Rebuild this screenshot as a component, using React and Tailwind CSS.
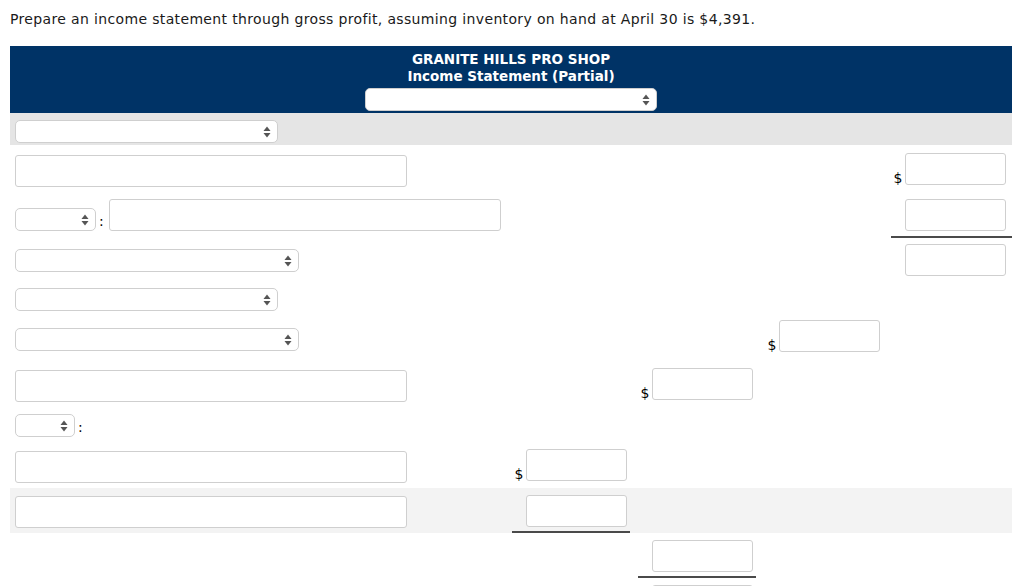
import React from "react";

const Arrows = () => (
  <svg width="8" height="12" viewBox="0 0 8 12" className="absolute right-[7px] top-1/2 -translate-y-1/2 pointer-events-none">
    <path d="M4 0.5 L7.5 5 L0.5 5 Z" fill="#555" />
    <path d="M4 11.5 L7.5 7 L0.5 7 Z" fill="#555" />
  </svg>
);

const Select = ({ w, mt = 0 }) => (
  <div className={`relative shrink-0 ${w}`} style={{ marginTop: mt }}>
    <select className="appearance-none block w-full h-[23px] bg-white border border-[#cfcfcf] rounded-[5px] outline-none" />
    <Arrows />
  </div>
);

const Box = ({ w = "w-[101px]", mt = 0 }) => (
  <div
    className={`shrink-0 h-[32px] ${w} bg-white border border-[#cfcfcf] rounded-[3px]`}
    style={{ marginTop: mt }}
  />
);

// one amount cell: optional $ sign, input, optional underline
const Amount = ({ dollar, pt = 0, line, lineW = "w-[118px]" }) => (
  <div
    className={`h-full ${line ? `${lineW} border-b-2 border-[#4a4a4a]` : ""}`}
    style={{ paddingTop: pt }}
  >
    <div className="flex items-end">
      <span className="w-[14px] text-center text-[14px] leading-none text-black">
        {dollar ? "$" : ""}
      </span>
      <Box />
    </div>
  </div>
);

const Row = ({ h, bg = "", label, c1, c2, c3, c4 }) => (
  <div className={`flex ${bg}`} style={{ height: h }}>
    <div className="w-[502px] shrink-0 flex items-start pl-[5px]">{label}</div>
    <div className="w-[126px] shrink-0">{c1}</div>
    <div className="w-[127px] shrink-0">{c2}</div>
    <div className="w-[126px] shrink-0">{c3}</div>
    <div className="w-[121px] shrink-0">{c4}</div>
  </div>
);

const Colon = ({ mt }) => (
  <span className="text-[14px] leading-none text-black ml-[3px] mr-[5px]" style={{ marginTop: mt }}>:</span>
);

export default function App() {
  return (
    <div className="bg-white w-[1024px] h-[586px] overflow-hidden font-['DejaVu_Sans',Verdana,sans-serif] text-[#1a1a1a]">
      <p className="pl-[10px] pt-[10px] text-[14px] leading-[18px] tracking-[0.35px]">
        Prepare an income statement through gross profit, assuming inventory on hand at April 30 is $4,391.
      </p>

      <div className="mx-[10px] mt-[18px] w-[1002px]">
        <div className="bg-[#003366] h-[67px] flex flex-col items-center pt-[5px]">
          <div className="text-white font-bold text-[13.5px] leading-[17px]">GRANITE HILLS PRO SHOP</div>
          <div className="text-white font-bold text-[13.5px] leading-[17px]">Income Statement (Partial)</div>
          <Select w="w-[292px]" mt={3} />
        </div>

        <div className="bg-[#e5e5e5] h-[32px] pl-[5px] pt-[7px]">
          <Select w="w-[263px]" />
        </div>

        <Row h={50} label={<Box w="w-[392px]" mt={10} />} c4={<Amount dollar pt={8} />} />
        <Row
          h={43}
          label={
            <>
              <Select w="w-[81px]" mt={13} />
              <Colon mt={19} />
              <Box w="w-[392px]" mt={4} />
            </>
          }
          c4={<Amount pt={4} line lineW="w-[121px]" />}
        />
        <Row h={42} label={<Select w="w-[284px]" mt={11} />} c4={<Amount pt={6} />} />
        <Row h={36} label={<Select w="w-[263px]" mt={8} />} />
        <Row h={45} label={<Select w="w-[284px]" mt={12} />} c3={<Amount dollar pt={4} />} />
        <Row h={45} label={<Box w="w-[392px]" mt={9} />} c2={<Amount dollar pt={7} />} />
        <Row
          h={38}
          label={
            <>
              <Select w="w-[60px]" mt={8} />
              <Colon mt={14} />
            </>
          }
        />
        <Row h={44} label={<Box w="w-[392px]" mt={7} />} c1={<Amount dollar pt={5} />} />
        <Row h={45} bg="bg-[#f3f3f3]" label={<Box w="w-[392px]" mt={8} />} c1={<Amount pt={7} line />} />
        <Row h={45} c2={<Amount pt={7} line />} />
        <Row h={45} c2={<Amount pt={7} />} />
      </div>
    </div>
  );
}
